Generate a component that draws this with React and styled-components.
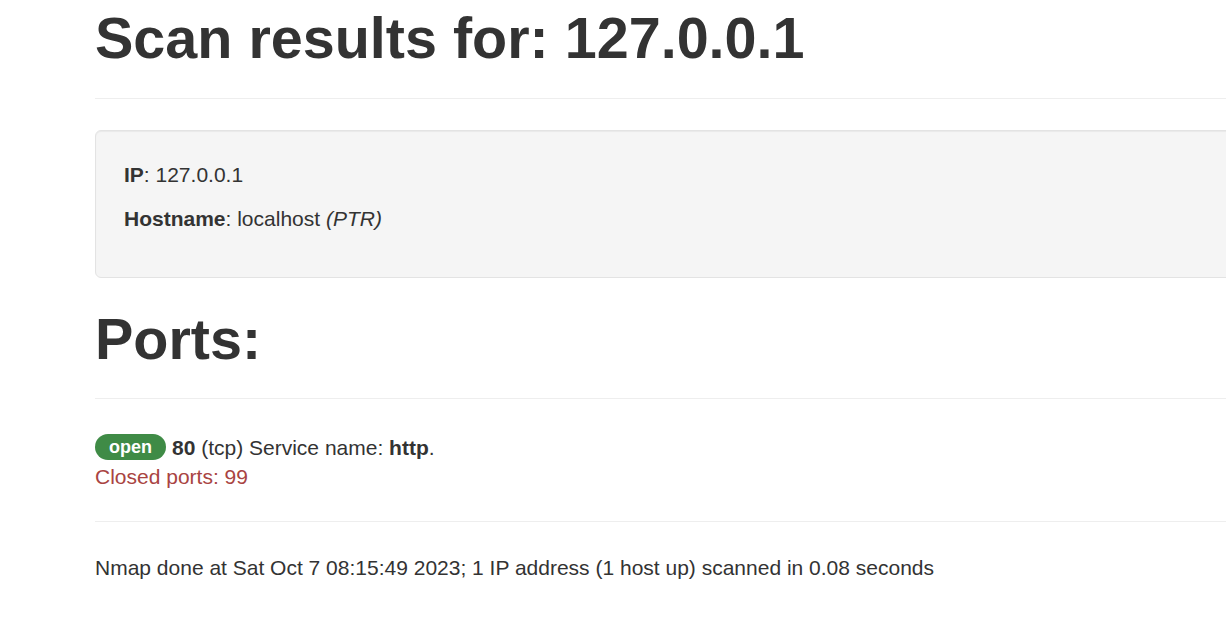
import styled, { createGlobalStyle } from "styled-components"

const GlobalStyle = createGlobalStyle`
  html, body {
    margin: 0;
    padding: 0;
    background: #fff;
    overflow: hidden;
  }
  body {
    font-family: "Liberation Sans", Arial, Helvetica, sans-serif;
    font-size: 21px;
    line-height: 29px;
    color: #333;
  }
`;

const Container = styled.div`
  width: 1400px;
  padding: 0 0 0 95px;
  box-sizing: border-box;
`;

const PageHeader = styled.h1`
  font-size: 57.5px;
  line-height: 62.7px;
  font-weight: 700;
  margin: ${(p) => p.$top}px 0 0;
  padding-bottom: 28px;
  border-bottom: 1px solid #eee;
`;

const Well = styled.div`
  margin-top: 31px;
  padding: 29px 28px;
  background: #f5f5f5;
  border: 1px solid #e3e3e3;
  border-radius: 6px;
  box-shadow: inset 0 1px 1px rgba(0, 0, 0, 0.05);
`;

const Para = styled.p`
  margin: 0 0 15px;
`;

const PortList = styled.div`
  padding-top: 33px;
  padding-bottom: 30px;
  border-bottom: 1px solid #eee;
`;

const PortLine = styled.div`
  height: 30px;
  display: flex;
  align-items: center;
  gap: 6px;
`;

const Badge = styled.span`
  display: inline-block;
  height: 26px;
  line-height: 26px;
  padding: 0 14px;
  border-radius: 13px;
  background: #3f8b46;
  color: #fff;
  font-size: 18px;
  font-weight: 700;
`;

const Danger = styled.div`
  color: #a94442;
`;

const Footer = styled.p`
  margin: 31px 0 0;
`;

export default function App() {
  return (
    <>
      <GlobalStyle />
      <Container>
        <PageHeader $top={7}>Scan results for: 127.0.0.1</PageHeader>
        <Well>
          <Para>
            <b>IP</b>: 127.0.0.1
          </Para>
          <Para>
            <b>Hostname</b>: localhost <i>(PTR)</i>
          </Para>
        </Well>
        <PageHeader $top={30}>Ports:</PageHeader>
        <PortList>
          <PortLine>
            <Badge>open</Badge>
            <span>
              <b>80</b> (tcp) Service name: <b>http</b>.
            </span>
          </PortLine>
          <Danger>Closed ports: 99</Danger>
        </PortList>
        <Footer>
          Nmap done at Sat Oct 7 08:15:49 2023; 1 IP address (1 host up) scanned in 0.08 seconds
        </Footer>
      </Container>
    </>
  )
}
